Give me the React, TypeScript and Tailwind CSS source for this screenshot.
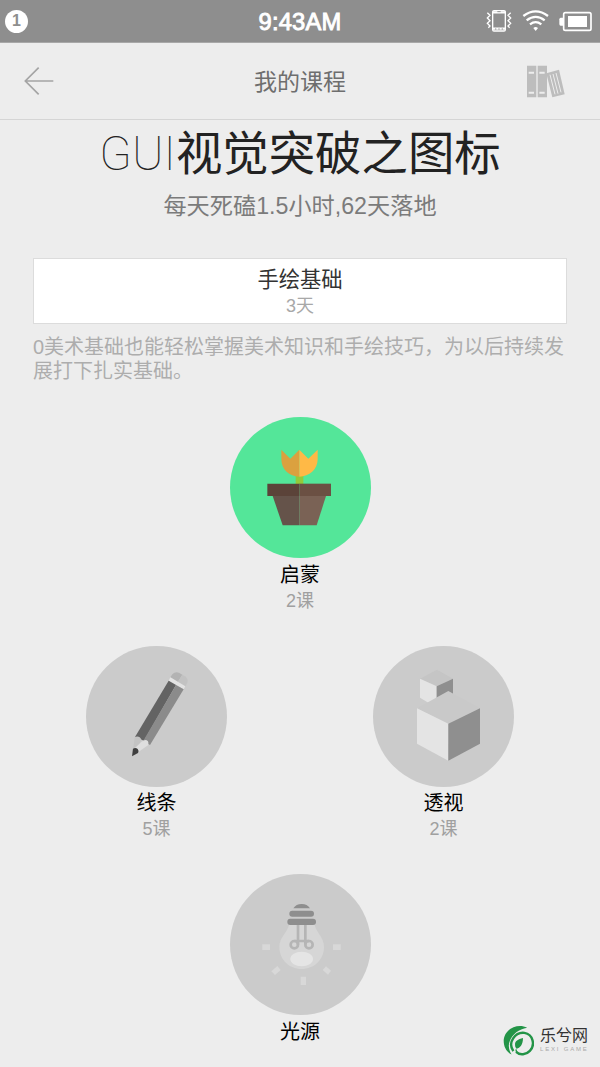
import type { ReactNode } from "react";

const StatusBar = () => (
  <div className="relative flex h-[43px] shrink-0 items-center justify-between border-b border-[#a8a8a8] bg-[#8e8e8e] pr-2 pl-[5px] text-white">
    <div className="flex h-[23px] w-[23px] items-center justify-center rounded-full bg-white text-[16px] leading-none font-bold text-[#8e8e8e]">
      1
    </div>
    <div className="absolute inset-x-0 top-[9px] text-center text-[23.700px] leading-[27px] tracking-[0.200px] [-webkit-text-stroke:0.9px_white]">
      9:43AM
    </div>
    <svg width="106" height="24" viewBox="0 0 318 72" fill="none" stroke="#fff">
      {/* vibrate */}
      <rect x="20" y="5" width="38" height="61" rx="4" strokeWidth="4" />
      <path d="M19 10h40M19 59h40" strokeWidth="7" />
      <path d="M27 60h4M37 60h4M47 60h4M34 8h10" stroke="#8e8e8e" strokeWidth="3" />
      <path d="M4 11l8 8-8 8 8 8-8 8 8 8-5 5M74 11l-8 8 8 8-8 8 8 8-8 8 5 5" strokeWidth="4" />
      {/* wifi */}
      <path d="M112 21q37-28 74 0M122 34q27-21 54 0M132 46q17-13 34 0" strokeWidth="7" />
      <path d="M142 57q7-6 14 0l-7 9z" fill="#fff" stroke="none" />
      {/* battery */}
      <rect x="233" y="11" width="82" height="53" rx="5" strokeWidth="5" />
      <path d="M231 26h-7q-4 0-4 5v14q0 5 4 5h7z" fill="#fff" stroke="none" />
      <rect x="246" y="21" width="57" height="33" fill="#fff" stroke="none" />
    </svg>
  </div>
);

const NavBar = () => (
  <div className="relative flex h-[77px] shrink-0 items-center justify-between border-b border-[#d5d5d5] pr-[35px] pl-6">
    <svg width="30" height="28" viewBox="0 0 90 84" fill="none" stroke="#a4a4a4" strokeWidth="5">
      <path d="M44 2L4 42l40 40M4 42h84" />
    </svg>
    <div className="absolute inset-x-0 top-[23px] text-center text-[23px] leading-[32px] text-[#6e6e6e]">
      我的课程
    </div>
    <svg width="38" height="33" viewBox="0 0 114 99" fill="#bdbdbd">
      <path d="M0 2h28v95H0zM32 2h28v95H32z" />
      <path d="M5 20h16v6H5zM37 20h16v6H37zM5 80h16v6H5zM37 80h16v6H37z" fill="#ededed" />
      <path d="M58 25l38-11 17 74-37 9z" />
      <path d="M69 29l15 59M78 27l15 59M87 24l15 58" stroke="#ededed" strokeWidth="3" />
    </svg>
  </div>
);

const PlantIcon = () => (
  <svg width="141" height="141" viewBox="29 22 423 423">
    <circle cx="240.500" cy="233.500" r="211.500" fill="#54e699" />
    <path d="M226 198h23v26h-23z" fill="#93ca3b" />
    <path d="M183 120l27 27 27-27v81c-30 0-54-22-54-52z" fill="#dba13f" />
    <path d="M237 120l27 27 28-27v29c0 30-25 52-55 52z" fill="#ffb946" />
    <path d="M157 259h80v88h-50z" fill="#65534a" />
    <path d="M237 259h80l-28 88h-52z" fill="#7a6255" />
    <path d="M141 222h96v37h-96z" fill="#5b4339" />
    <path d="M237 222h95v37h-95z" fill="#6b5043" />
  </svg>
);

const PencilIcon = () => (
  <svg width="141" height="141" viewBox="30 17 423 423">
    <circle cx="241.500" cy="228.500" r="211.500" fill="#cbcbcb" />
    <path d="M283 111l6-9q8-9 20-5l10 6-14 23z" fill="#b3b3b3" />
    <path d="M319 103l8 5q11 8 7 19l-6 12-23-13z" fill="#c2c2c2" />
    <path d="M283 111l45 27-5 9-45-26z" fill="#e3e3e3" />
    <path d="M278 121l22 13-96 167-27-11z" fill="#636363" />
    <path d="M300 134l23 13-101 167-20-13z" fill="#8b8b8b" />
    <path d="M176 290q15-5 20 8l-12 27-13 5z" fill="#c3c3c3" />
    <path d="M196 305q12-11 20-2 3 6 0 12l-30 21-10-12z" fill="#dedede" />
    <path d="M171 325q8-4 14 1 5 6 1 12l-18 10z" fill="#3f3f3f" />
  </svg>
);

const CubesIcon = () => (
  <svg width="141" height="141" viewBox="30 17 423 423">
    <circle cx="241.500" cy="228.500" r="211.500" fill="#cbcbcb" />
    <path d="M171 115l51-27 48 27-49 23z" fill="#c5c5c5" />
    <path d="M171 115l50 23v64l-50-30z" fill="#e4e4e4" />
    <path d="M270 115v63l-49 24v-64z" fill="#8f8f8f" />
    <path d="M162 204l94-52 95 52-95 46z" fill="#c9c9c9" />
    <path d="M162 204l94 46v111l-94-51z" fill="#e4e4e4" />
    <path d="M351 204v106l-95 51V250z" fill="#8f8f8f" />
  </svg>
);

const BulbIcon = () => (
  <svg width="141" height="141" viewBox="28 27 423 423">
    <circle cx="239.500" cy="238.500" r="211.500" fill="#cbcbcb" />
    <path d="M205 180h77c5 23 28 37 28 66 0 38-30 66-67 66s-67-28-67-66c0-29 24-43 29-66z" fill="#d6d6d6" />
    <ellipse cx="243" cy="282" rx="34" ry="22" fill="#e5e5e5" />
    <g fill="none" stroke="#b5b5b5" strokeWidth="8">
      <path d="M232 178v61M254 178v61M221 228h44" />
      <circle cx="221" cy="239" r="11" />
      <circle cx="265" cy="239" r="11" />
    </g>
    <path d="M218 130q8-13 25-13t25 13z" fill="#8e8e8e" />
    <rect x="206" y="137" width="74" height="18" rx="9" fill="#8e8e8e" />
    <rect x="200" y="161" width="86" height="19" rx="9" fill="#8e8e8e" />
    <path
      d="M125 238h23v17h-23zM337 238h23v17h-23zM240 335h16v25h-16zM152 319l18-16 10 12-17 15zM306 315l10-11 15 13-9 12z"
      fill="#d8d8d8"
    />
  </svg>
);

const Lesson = ({ icon, name, count }: { icon: ReactNode; name: string; count?: string }) => (
  <div className="flex h-[228.500px] w-[142px] flex-col items-center">
    {icon}
    <div className="pt-[1.500px] text-[20px] leading-[31px] text-black">{name}</div>
    {count && <div className="text-[18px] leading-[21px] text-[#a0a0a0]">{count}</div>}
  </div>
);

const Watermark = () => (
  <div className="absolute top-[1025px] left-[503px] flex gap-[6px]">
    <svg width="31" height="31" viewBox="0 0 90 90">
      <path
        d="M70 8C44-6 3 10 2 46c0 19 9 33 23 40-8-13-11-27-5-40C27 27 46 12 70 8z"
        fill="#239447"
      />
      <path
        d="M30 76C12 50 36 20 62 23c26 4 32 36 16 52-10 11-29 14-40 3"
        fill="none"
        stroke="#239447"
        strokeWidth="7"
      />
      <path d="M58 38c-14 3-24 9-23 20 0 5 2 8 5 11 9-2 18-11 18-31zM38 68c-4 6 0 14 6 15z" fill="#239447" />
    </svg>
    <div className="flex flex-col">
      <span className="text-[16px] leading-[21px] whitespace-nowrap text-[#333]">乐兮网</span>
      <span className="text-[6px] leading-[7px] tracking-[1.800px] whitespace-nowrap text-[#aaa]">LEXI GAME</span>
    </div>
  </div>
);

const App = () => {
  return (
    <div className="relative flex h-[1067px] w-[600px] flex-col overflow-hidden bg-[#ededed] font-['Liberation_Sans','Noto_Sans_CJK_SC',sans-serif]">
      <StatusBar />
      <NavBar />

      <div className="flex flex-col items-center">
        <h1 className="mt-[2px] flex h-[64px] items-center text-[46.400px] leading-[64px] whitespace-nowrap text-[#222]">
          <span className="font-['Roboto'] text-[47.500px] font-thin">GUI</span>
          视觉突破之图标
        </h1>
        <div className="mt-[3px] text-[23.200px] leading-[34px] text-[#7b7b7b]">
          每天死磕1.5小时,62天落地
        </div>
      </div>

      <div className="mx-[33px] mt-[35px] flex h-[66px] shrink-0 flex-col items-center border border-[#dcdcdc] bg-white pt-[6px]">
        <div className="text-[21.300px] leading-[30px] text-[#333]">手绘基础</div>
        <div className="text-[18px] leading-[23px] text-[#a8a8a8]">3天</div>
      </div>
      <p className="mx-[33px] mt-[12px] text-[20px] leading-[23.500px] whitespace-nowrap text-[#adadad]">
        0美术基础也能轻松掌握美术知识和手绘技巧，为以后持续发
        <br />
        展打下扎实基础。
      </p>

      <div className="mt-[34px] flex flex-col">
        <div className="flex justify-center">
          <Lesson icon={<PlantIcon />} name="启蒙" count="2课" />
        </div>
        <div className="flex justify-between px-[85.500px]">
          <Lesson icon={<PencilIcon />} name="线条" count="5课" />
          <Lesson icon={<CubesIcon />} name="透视" count="2课" />
        </div>
        <div className="flex justify-center">
          <Lesson icon={<BulbIcon />} name="光源" />
        </div>
      </div>

      <Watermark />
    </div>
  );
};

export default App;
